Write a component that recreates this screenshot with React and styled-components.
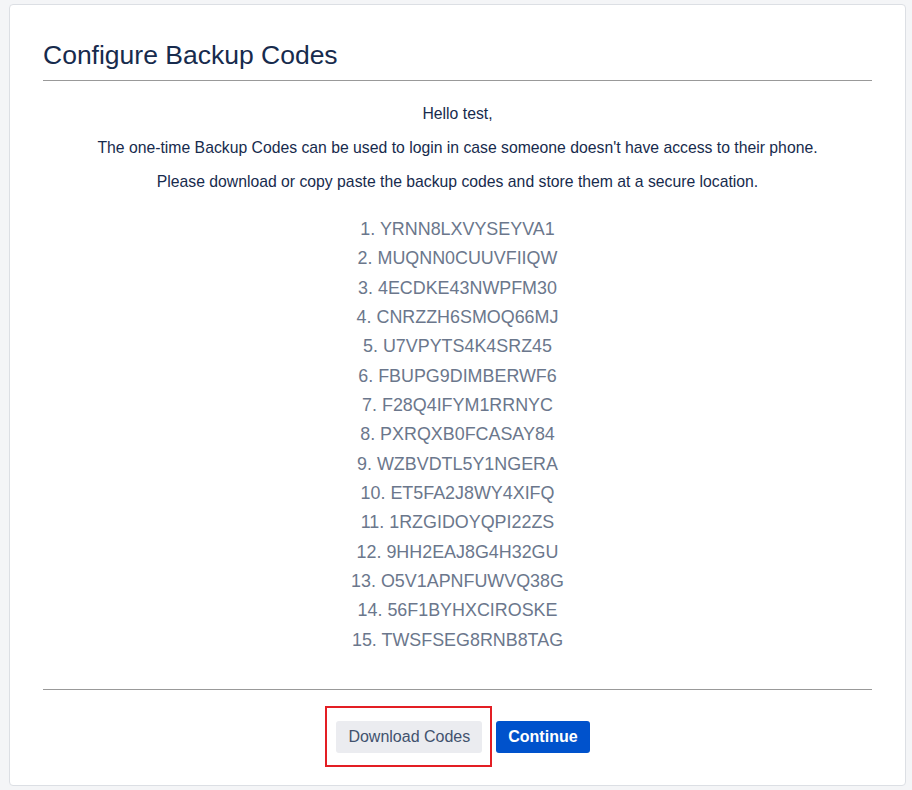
import React from "react";
import styled, { createGlobalStyle } from "styled-components";

const Global = createGlobalStyle`
  html, body { margin: 0; background: #f4f5f7; font-family: "Liberation Sans", Arial, sans-serif; }
`;

const Page = styled.div`
  padding: 4px 6px 4px 9px;
`;

const Card = styled.div`
  background: #fff;
  border: 1px solid #dcdfe4;
  border-radius: 4px;
  padding: 34px 33px 20px 33px;
  height: 782px;
  box-sizing: border-box;
`;

const Title = styled.h1`
  margin: 0;
  font-size: 26.5px;
  font-weight: 400;
  color: #172b4d;
  line-height: 32px;
  padding-bottom: 9px;
  border-bottom: 1px solid #999;
`;

const Body = styled.div`
  text-align: center;
  color: #172b4d;
  font-size: 15.75px;
  padding-top: 16px;
`;

const Para = styled.p`
  margin: 0;
  line-height: 34px;
`;

const Codes = styled.ol`
  list-style: none;
  margin: 16px 0 0;
  padding: 0 0 34px;
  color: #6b778c;
  font-size: 17.9px;
  line-height: 29.35px;
  border-bottom: 1px solid #999;
`;

const Actions = styled.div`
  display: flex;
  justify-content: center;
  align-items: center;
  gap: 4px;
  padding-top: 16px;
`;

const Highlight = styled.div`
  border: 2px solid #e31e24;
  padding: 13px 8px 12px 9px;
`;

const Button = styled.button`
  font-family: inherit;
  font-size: 16px;
  height: 32px;
  padding: 0 12px;
  border: none;
  border-radius: 3px;
  background: ${(p) => (p.primary ? "#0052cc" : "#ebecf0")};
  color: ${(p) => (p.primary ? "#fff" : "#42526e")};
  font-weight: ${(p) => (p.primary ? 700 : 400)};
`;

const codes = [
  "YRNN8LXVYSEYVA1", "MUQNN0CUUVFIIQW", "4ECDKE43NWPFM30", "CNRZZH6SMOQ66MJ",
  "U7VPYTS4K4SRZ45", "FBUPG9DIMBERWF6", "F28Q4IFYM1RRNYC", "PXRQXB0FCASAY84",
  "WZBVDTL5Y1NGERA", "ET5FA2J8WY4XIFQ", "1RZGIDOYQPI22ZS", "9HH2EAJ8G4H32GU",
  "O5V1APNFUWVQ38G", "56F1BYHXCIROSKE", "TWSFSEG8RNB8TAG",
];

export default function App() {
  return (
    <Page>
      <Global />
      <Card>
        <Title>Configure Backup Codes</Title>
        <Body>
          <Para>Hello test,</Para>
          <Para>The one-time Backup Codes can be used to login in case someone doesn't have access to their phone.</Para>
          <Para>Please download or copy paste the backup codes and store them at a secure location.</Para>
          <Codes>
            {codes.map((c, i) => (
              <li key={c}>{i + 1}. {c}</li>
            ))}
          </Codes>
        </Body>
        <Actions>
          <Highlight>
            <Button>Download Codes</Button>
          </Highlight>
          <Button primary>Continue</Button>
        </Actions>
      </Card>
    </Page>
  );
}
